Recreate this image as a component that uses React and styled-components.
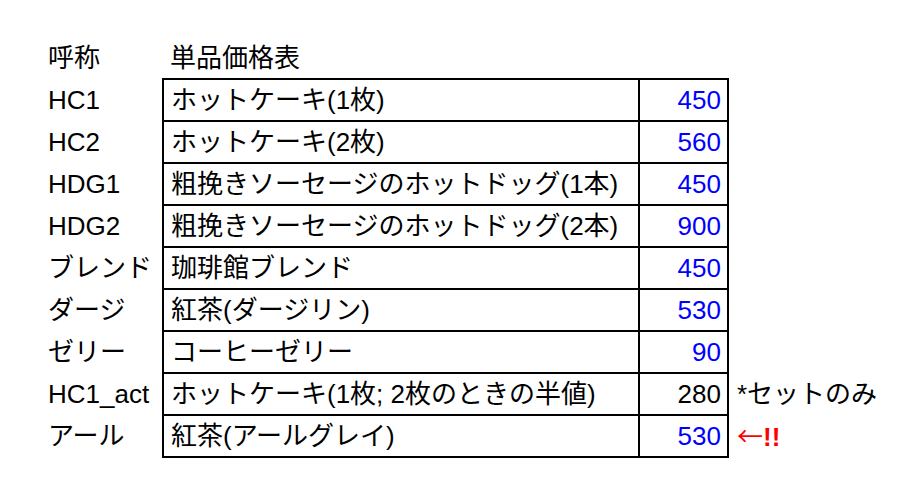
import React from 'react';
import styled, { createGlobalStyle } from 'styled-components';

const GlobalStyle = createGlobalStyle`
  body {
    margin: 0;
    background: #ffffff;
  }
`;

const rows = [
  { code: 'HC1', name: 'ホットケーキ(1枚)', price: 450, blue: true },
  { code: 'HC2', name: 'ホットケーキ(2枚)', price: 560, blue: true },
  { code: 'HDG1', name: '粗挽きソーセージのホットドッグ(1本)', price: 450, blue: true },
  { code: 'HDG2', name: '粗挽きソーセージのホットドッグ(2本)', price: 900, blue: true },
  { code: 'ブレンド', name: '珈琲館ブレンド', price: 450, blue: true },
  { code: 'ダージ', name: '紅茶(ダージリン)', price: 530, blue: true },
  { code: 'ゼリー', name: 'コーヒーゼリー', price: 90, blue: true },
  { code: 'HC1_act', name: 'ホットケーキ(1枚; 2枚のときの半値)', price: 280, note: '*セットのみ' },
  { code: 'アール', name: '紅茶(アールグレイ)', price: 530, blue: true, alert: true },
];

const App = () => {
  return (
    <>
      <GlobalStyle />
      <Sheet>
        <colgroup>
          <col style={{ width: 117 }} />
          <col style={{ width: 476 }} />
          <col style={{ width: 89 }} />
          <col />
        </colgroup>
        <thead>
          <Row>
            <Label>呼称</Label>
            <Heading>単品価格表</Heading>
            <Label />
            <Label />
          </Row>
        </thead>
        <tbody>
          {rows.map((r) => (
            <Row key={r.code}>
              <Label>{r.code}</Label>
              <Name>{r.name}</Name>
              <Price $blue={r.blue}>{r.price}</Price>
              <Note>
                {r.note}
                {r.alert && (
                  <Alert>
                    <Arrow>←</Arrow>!!
                  </Alert>
                )}
              </Note>
            </Row>
          ))}
        </tbody>
      </Sheet>
    </>
  );
};

// 表全体
const Sheet = styled.table`
  border-collapse: collapse;
  table-layout: fixed;
  width: 860px;
  margin: 37px 0 0 46px;
  font-family: "Liberation Sans", "Noto Sans CJK JP", sans-serif;
  font-size: 26px;
  line-height: 30px;
  color: #000000;
`;

const Row = styled.tr`
  height: 42px;
`;

// 左端の呼称（枠なし）
const Label = styled.td`
  padding: 0 0 0 2px;
  white-space: nowrap;
  vertical-align: middle;
`;

const Heading = styled.td`
  padding: 0 7px;
  white-space: nowrap;
`;

const Name = styled.td`
  border: 2px solid #000000;
  padding: 0 7px;
  white-space: nowrap;
`;

const Price = styled.td`
  border: 2px solid #000000;
  padding: 0 6px 0 0;
  text-align: right;
  color: ${(p) => (p.$blue ? '#0000ff' : '#000000')};
`;

// 右側の注記
const Note = styled.td`
  padding: 0 0 0 8px;
  white-space: nowrap;
`;

const Alert = styled.span`
  color: #ff0000;
  font-weight: bold;
`;

// 全角の矢印
const Arrow = styled.span`
  font-family: "Noto Sans CJK JP", sans-serif;
  font-weight: normal;
`;

export default App;
